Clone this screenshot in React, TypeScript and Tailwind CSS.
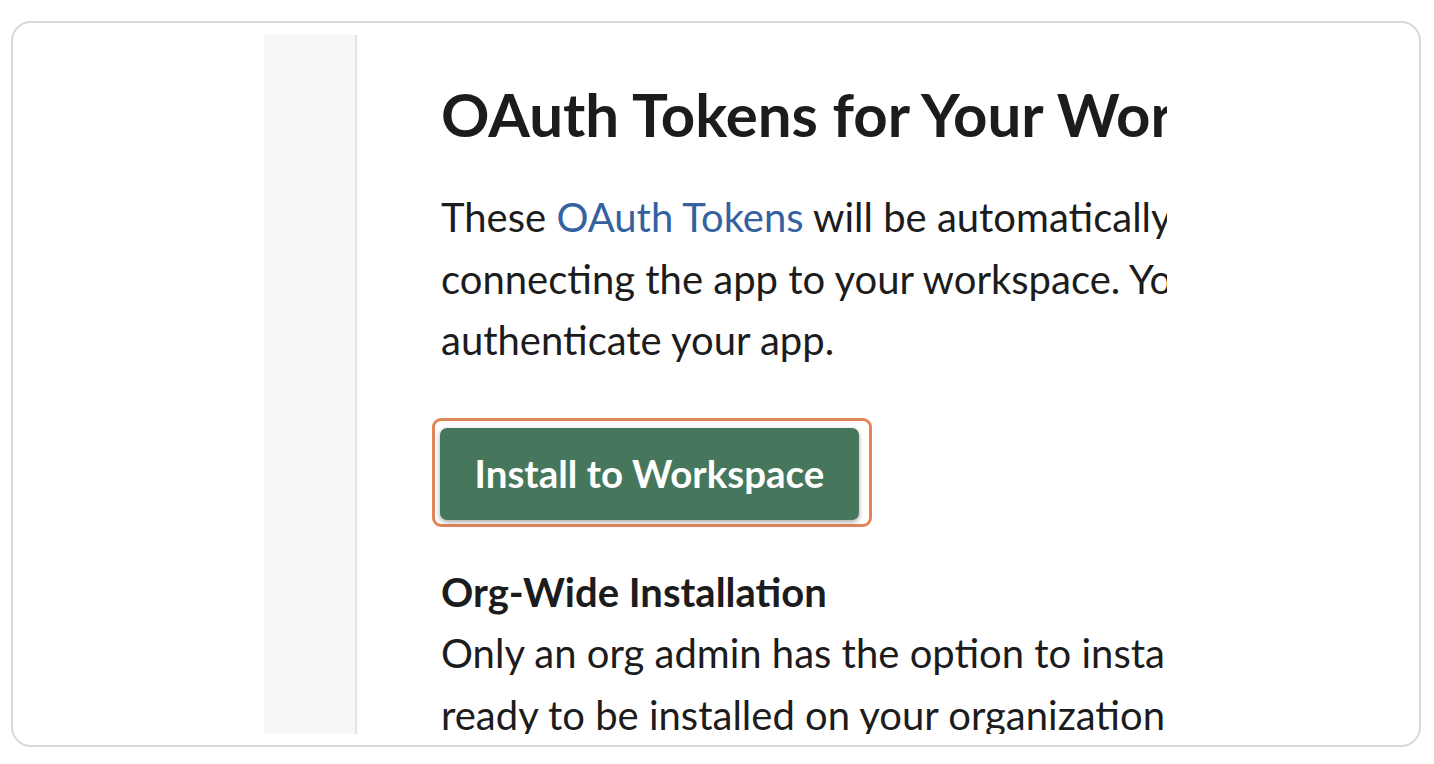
export default function App() {
  return (
    <div className="h-[764px] w-[1434px] bg-white p-[11px] pt-[21px] pb-[17px] pr-[13px] font-['Lato','Noto_Sans',sans-serif] text-[#1d1c1d]">
      <div className="flex h-full w-full rounded-[20px] border-2 border-[#d9d9d9] pl-[251px] pt-[12px] pb-[11px]">
        <div className="flex h-full w-[903px] overflow-hidden">
          <div className="w-[93px] shrink-0 border-r-2 border-[#e4e4e4] bg-[#f7f7f7]" />
          <div className="min-w-0 flex-1 overflow-hidden pl-[84px] pt-[43px]">
            <div className="w-[1300px]">
              <h1 className="text-[60px] leading-[72px] font-bold whitespace-nowrap">
                OAuth Tokens for Your Workspace
              </h1>
              <p className="mt-[37px] text-[40px] leading-[61.5px] whitespace-nowrap">
                <span className="block">
                  These <span className="text-[#35629f]">OAuth Tokens</span> will be automatically generated after
                </span>
                <span className="block">connecting the app to your workspace. You can use these tokens to</span>
                <span className="block">authenticate your app.</span>
              </p>
              <div className="mt-[46px] ml-[-9px] inline-block rounded-[9px] border-[3px] border-[#e0875a] pt-[7px] pr-[10px] pb-[4px] pl-[5px]">
                <button className="flex h-[92px] w-[419px] items-center justify-center rounded-[7px] bg-[#46775c] text-[38.5px] font-bold text-white shadow-[0_2px_5px_rgba(0,0,0,0.35)]">
                  Install to Workspace
                </button>
              </div>
              <h2 className="mt-[35px] text-[40px] leading-[61.5px] font-bold">Org-Wide Installation</h2>
              <p className="text-[40px] leading-[61.5px] whitespace-nowrap">
                <span className="block">Only an org admin has the option to install this app once the app is</span>
                <span className="block">ready to be installed on your organization</span>
              </p>
            </div>
          </div>
        </div>
      </div>
    </div>
  );
}
